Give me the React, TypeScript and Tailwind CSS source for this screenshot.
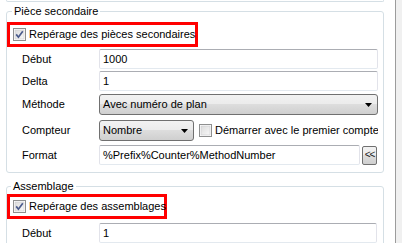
import type { ReactNode } from 'react';

function CheckBox({ checked }: { checked?: boolean }) {
  return (
    <svg width="13" height="13" viewBox="0 0 13 13" className="shrink-0">
      <defs>
        <linearGradient id="cbfill" x1="0" y1="0" x2="1" y2="1">
          <stop offset="0" stopColor="#dcdcdc" />
          <stop offset="1" stopColor="#f8f8f8" />
        </linearGradient>
      </defs>
      <rect x="0.5" y="0.5" width="12" height="12" fill="#fff" stroke="#8e8f8f" />
      <rect x="2" y="2" width="9" height="9" fill="url(#cbfill)" stroke="#c9cacc" strokeWidth="0.6" />
      {checked && (
        <path d="M3.2 6.4 L5.4 9.2 L9.8 3.2" fill="none" stroke="#4a5b8c" strokeWidth="1.7" />
      )}
    </svg>
  );
}

function Arrow() {
  return (
    <svg width="7" height="4" viewBox="0 0 7 4" className="shrink-0">
      <path d="M0 0 H7 L3.5 4 Z" fill="#000" />
    </svg>
  );
}

function Row({ label, mt, children }: { label: string; mt: string; children: ReactNode }) {
  return (
    <div className={`flex items-center ${mt}`}>
      <span className="w-[77px] pl-[15px] shrink-0 box-content">{label}</span>
      {children}
    </div>
  );
}

const inputCls =
  'h-[20px] flex items-center pl-[3px] border border-t-[#abadb3] border-x-[#e2e3ea] border-b-[#e3e9ef] rounded-[2px] bg-white whitespace-nowrap';
const selectCls =
  'flex items-center justify-between pl-[3px] pr-[5px] h-[21px] border border-[#707070] rounded-[3px] bg-[linear-gradient(#f2f2f2_0%,#ebebeb_50%,#dddddd_50%,#cfcfcf_100%)] whitespace-nowrap';

export default function App() {
  return (
    <div className="w-[402px] h-[243px] overflow-hidden bg-white flex font-['Liberation_Sans',Arial,sans-serif] text-[11px] leading-[13px] text-black">
      <div className="w-[395px] shrink-0 pl-[6px]">
        {/* end of the group above */}
        <div className="w-[378px] h-[2px] border-x border-b border-[#d5dfe5] rounded-b-[3px]" />

        {/* Pièce secondaire */}
        <fieldset className="mt-[3px] w-[378px] border border-[#d5dfe5] rounded-[3px] pb-[7px]">
          <legend className="ml-[5px] px-[2px] leading-[13px]">Pièce secondaire</legend>
          <div className="mt-[4px] w-[191px] h-[25px] border-[3px] border-[#ff0000] flex items-center pl-[3px] gap-[3px] whitespace-nowrap">
            <CheckBox checked />
            <span>Repérage des pièces secondaires</span>
          </div>
          <Row label="Début" mt="mt-[2px]">
            <div className={`${inputCls} w-[279px]`}>1000</div>
          </Row>
          <Row label="Delta" mt="mt-[2px]">
            <div className={`${inputCls} w-[279px]`}>1</div>
          </Row>
          <Row label="Méthode" mt="mt-[3px]">
            <div className={`${selectCls} w-[279px]`}>
              <span>Avec numéro de plan</span>
              <Arrow />
            </div>
          </Row>
          <Row label="Compteur" mt="mt-[5px]">
            <div className={`${selectCls} w-[95px]`}>
              <span>Nombre</span>
              <Arrow />
            </div>
            <div className="ml-[5px] w-[179px] flex items-center gap-[3px] overflow-hidden whitespace-nowrap">
              <CheckBox />
              <span>Démarrer avec le premier compteur</span>
            </div>
          </Row>
          <Row label="Format" mt="mt-[4px]">
            <div className={`${inputCls} w-[261px]`}>%Prefix%Counter%MethodNumber</div>
            <button className="ml-[2px] w-[15px] h-[19px] flex items-center justify-center border border-[#707070] rounded-[2px] bg-[linear-gradient(#f2f2f2_0%,#ebebeb_50%,#dddddd_50%,#cfcfcf_100%)] text-[10px] leading-none tracking-[-1px] text-[#222]">
              &lt;&lt;
            </button>
          </Row>
        </fieldset>

        {/* Assemblage */}
        <fieldset className="mt-[7px] w-[378px] border border-[#d5dfe5] rounded-[3px] pb-[7px]">
          <legend className="ml-[4px] px-[2px] leading-[13px]">Assemblage</legend>
          <div className="mt-[1px] w-[160px] h-[25px] border-[3px] border-[#ff0000] flex items-center pl-[3px] gap-[3px] whitespace-nowrap">
            <CheckBox checked />
            <span>Repérage des assemblages</span>
          </div>
          <Row label="Début" mt="mt-[4px]">
            <div className={`${inputCls} w-[278px]`}>1</div>
          </Row>
        </fieldset>
      </div>
      <div className="flex-1 border-l border-[#9c9c9c] bg-[#f0f0f0]" />
    </div>
  );
}
